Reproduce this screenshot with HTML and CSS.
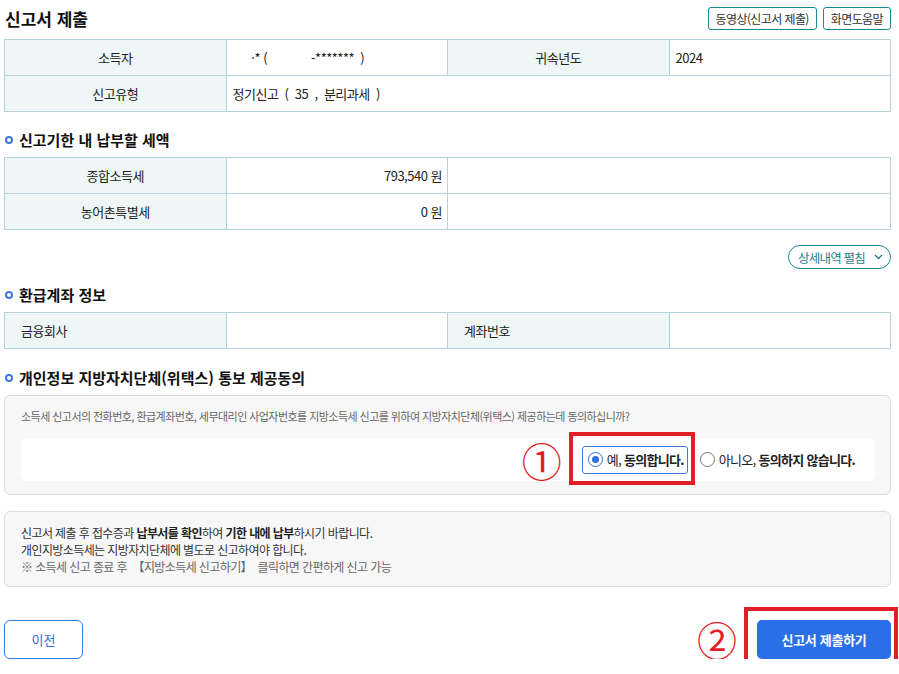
FILE: index.html
```html
<!DOCTYPE html>
<html lang="ko">
<head>
    <meta charset="UTF-8">
    <meta name="viewport" content="width=device-width, initial-scale=1.0">
    <title>신고서 제출</title>
    <link rel="stylesheet" href="styles.css">
</head>
<body>

<div class="page-head">
    <h1 class="page-title">신고서 제출</h1>
    <div class="head-btns">
        <button class="btn-line">동영상(신고서 제출)</button>
        <button class="btn-line">화면도움말</button>
    </div>
</div>

<table class="info-table">
    <colgroup>
        <col class="c1"><col class="c2"><col class="c3"><col class="c4">
    </colgroup>
    <tr>
        <th>소득자</th>
        <td class="pre">      ·* (              -*******  )</td>
        <th>귀속년도</th>
        <td>2024</td>
    </tr>
    <tr>
        <th>신고유형</th>
        <td colspan="3" class="pre">정기신고  (  35  ,  분리과세  )</td>
    </tr>
</table>

<h2 class="sec-title">신고기한 내 납부할 세액</h2>
<table class="info-table">
    <colgroup>
        <col class="c1"><col class="c2"><col class="c3"><col class="c4">
    </colgroup>
    <tr>
        <th>종합소득세</th>
        <td class="num">793,540 원</td>
        <td colspan="2"></td>
    </tr>
    <tr>
        <th>농어촌특별세</th>
        <td class="num">0 원</td>
        <td colspan="2"></td>
    </tr>
</table>

<div class="more-row">
    <button class="btn-pill">상세내역 펼침
        <svg width="9" height="6" viewBox="0 0 9 6"><path d="M1 1 L4.5 4.5 L8 1" fill="none" stroke="#1b7f8c" stroke-width="1.3"/></svg>
    </button>
</div>

<h2 class="sec-title sec-refund">환급계좌 정보</h2>
<table class="info-table left-th">
    <colgroup>
        <col class="c1"><col class="c2"><col class="c3"><col class="c4">
    </colgroup>
    <tr>
        <th>금융회사</th>
        <td></td>
        <th>계좌번호</th>
        <td></td>
    </tr>
</table>

<h2 class="sec-title sec-consent">개인정보 지방자치단체(위택스) 통보 제공동의</h2>
<div class="gray-box consent-box">
    <p class="consent-text">소득세 신고서의 전화번호, 환급계좌번호, 세무대리인 사업자번호를 지방소득세 신고를 위하여 지방자치단체(위택스) 제공하는데 동의하십니까?</p>
    <div class="radio-row">
        <span class="mark">①</span>
        <label class="opt opt-on marked-1"><span class="radio checked"></span>예,&nbsp;<b>동의합니다.</b></label>
        <label class="opt"><span class="radio"></span>아니오,&nbsp;<b>동의하지 않습니다.</b></label>
    </div>
</div>

<div class="gray-box notice-box">
    <p>신고서 제출 후 접수증과 <b>납부서를 확인</b>하여 <b>기한 내에 납부</b>하시기 바랍니다.</p>
    <p>개인지방소득세는 지방자치단체에 별도로 신고하여야 합니다.</p>
    <p class="gray">※ 소득세 신고 종료 후 &nbsp;【지방소득세 신고하기】 &nbsp;클릭하면 간편하게 신고 가능</p>
</div>

<div class="bottom-row">
    <button class="btn-prev">이전</button>
    <div class="submit-wrap">
        <span class="mark">②</span>
        <button class="btn-submit marked-2">신고서 제출하기</button>
    </div>
</div>

</body>
</html>
```

FILE: styles.css
```css
body {
    margin: 0;
    padding: 0 8px 0 4px;
    font-family: "Noto Sans CJK KR", "Noto Sans", sans-serif;
    font-size: 13px;
    color: #222;
    background: #fff;
}

button {
    font-family: inherit;
    cursor: pointer;
}

.page-head {
    display: flex;
    justify-content: space-between;
    align-items: center;
    padding-top: 7px;
    margin-bottom: 9px;
}
.page-title {
    margin: 0 0 0 1px;
    font-size: 17px;
    font-weight: 700;
    line-height: 23px;
    color: #111;
}
.head-btns {
    display: flex;
    gap: 6px;
}
.btn-line {
    height: 23px;
    padding: 0 7px;
    background: #fff;
    border: 1px solid #1a8a96;
    border-radius: 3px;
    font-size: 12px;
    letter-spacing: -0.6px;
    color: #333;
    line-height: 21px;
}

.info-table {
    width: 100%;
    border-collapse: collapse;
    table-layout: fixed;
}
.info-table .c1, .info-table .c2, .info-table .c3 { width: 25%; }
.info-table th, .info-table td {
    height: 35px;
    border: 1px solid #b3d4d9;
    padding: 0 6px;
    font-size: 13px;
    line-height: 18px;
    letter-spacing: -0.5px;
}
.info-table th {
    background: #eef7f6;
    font-weight: 400;
    text-align: center;
}
.info-table td { text-align: left; }
.info-table td.num { text-align: right; padding-right: 5px; }
.info-table td.pre { white-space: pre; }
.left-th th { text-align: left; padding-left: 16px; }

.sec-title {
    position: relative;
    margin: 18px 0 7px;
    padding-left: 15px;
    font-size: 15px;
    font-weight: 700;
    line-height: 20px;
    color: #111;
}
.sec-title:before {
    content: "";
    position: absolute;
    left: 1px;
    top: 6px;
    width: 4px;
    height: 4px;
    border: 2px solid #3a78e0;
    border-radius: 50%;
}
.sec-refund { margin-top: 16px; }
.sec-consent { margin-top: 19px; margin-bottom: 7px; }

.more-row {
    display: flex;
    justify-content: flex-end;
    margin-top: 15px;
}
.btn-pill {
    display: flex;
    align-items: center;
    gap: 9px;
    height: 24px;
    padding: 0 7px 0 9px;
    background: #fff;
    border: 1px solid #1a8a96;
    border-radius: 12px;
    font-size: 12.5px;
    letter-spacing: -0.8px;
    color: #1b7f8c;
}

.gray-box {
    background: #f7f7f7;
    border: 1px solid #dcdcdc;
    border-radius: 6px;
}
.consent-box {
    padding: 12px 15px 13px 16px;
}
.consent-text {
    margin: 0 0 13px;
    font-size: 11px;
    letter-spacing: -0.55px;
    line-height: 17px;
    color: #666;
}
.radio-row {
    display: flex;
    justify-content: flex-end;
    align-items: center;
    height: 43px;
    padding-right: 20px;
    background: #fff;
    border-radius: 6px;
}
.mark {
    font-size: 40px;
    line-height: 40px;
    color: #e41e26;
    margin-right: 20px;
}
.opt {
    position: relative;
    display: flex;
    align-items: center;
    height: 26px;
    padding: 0 3px 0 5px;
    font-size: 13px;
    letter-spacing: -0.7px;
    white-space: nowrap;
}
.opt b { font-weight: 700; }
.opt-on {
    border: 1px solid #3a78e0;
    border-radius: 3px;
}
.opt + .opt { margin-left: 12px; padding: 0; }
.radio {
    width: 15px;
    height: 15px;
    margin-right: 4px;
    border: 1px solid #777;
    border-radius: 50%;
    background: #fff;
    box-sizing: border-box;
    position: relative;
}
.radio.checked { border-color: #2f6fe0; }
.radio.checked:after {
    content: "";
    position: absolute;
    left: 3px;
    top: 3px;
    width: 7px;
    height: 7px;
    border-radius: 50%;
    background: #2f6fe0;
}

.marked-1:after, .marked-2:after {
    content: "";
    position: absolute;
    border: 4px solid #e41e26;
    pointer-events: none;
}
.marked-1:after { left: -14px; right: -8px; top: -15px; bottom: -12px; }

.notice-box {
    margin-top: 16px;
    padding: 12px 16px 11px;
}
.notice-box p {
    margin: 0;
    font-size: 12px;
    letter-spacing: -0.6px;
    line-height: 17px;
    color: #333;
}
.notice-box b { font-weight: 700; color: #222; }
.notice-box .gray { color: #666; }

.bottom-row {
    display: flex;
    justify-content: space-between;
    align-items: center;
    margin-top: 32px;
}
.btn-prev {
    width: 79px;
    height: 39px;
    background: #fff;
    border: 1px solid #3a7be0;
    border-radius: 6px;
    font-size: 13px;
    color: #2f6fe0;
}
.submit-wrap {
    display: flex;
    align-items: center;
}
.btn-submit {
    position: relative;
    width: 134px;
    height: 39px;
    background: #2a6fe8;
    border: none;
    border-radius: 5px;
    font-size: 13px;
    font-weight: 700;
    letter-spacing: -0.3px;
    color: #fff;
}
.marked-2:after { left: -13px; right: -7px; top: -13px; bottom: -7px; }
```
